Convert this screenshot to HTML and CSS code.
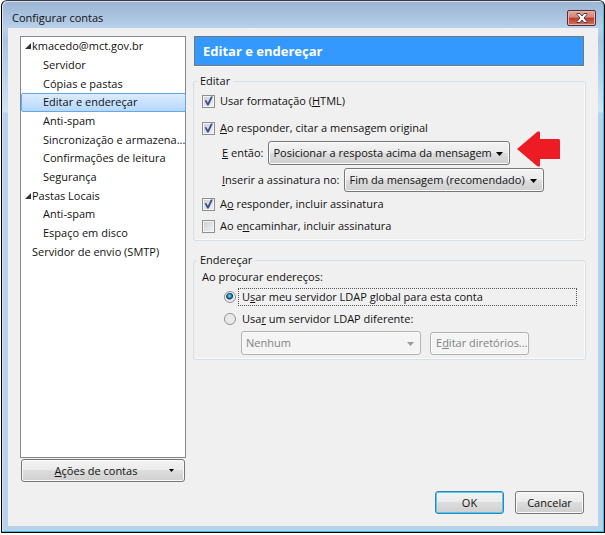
FILE: index.html
```
<!DOCTYPE html>
<html lang="pt-BR">
<head>
<meta charset="utf-8">
<title>Configurar contas</title>
<link rel="stylesheet" href="styles.css">
</head>
<body>
<div class="window">
  <header class="titlebar">
    <h1>Configurar contas</h1>
    <button class="close" type="button" aria-label="Fechar">
      <svg width="12" height="10" viewBox="0 0 12 10"><path d="M1 .5h3L6 3 8 .5h3v1L8 5l3 3.5v1H8L6 7 4 9.500H1v-1L4 5 1 1.500z" fill="#fff" stroke="#4c3b4d" stroke-width="1"/></svg>
    </button>
  </header>
  <form class="client">
    <div class="columns">
      <nav class="sidebar">
        <ul class="tree">
          <li class="parent"><svg class="twisty" viewBox="0 0 6 6"><path d="M6 0v6H0z"/></svg>kmacedo@mct.gov.br</li>
          <li class="child">Servidor</li>
          <li class="child">Cópias e pastas</li>
          <li class="child selected">Editar e endereçar</li>
          <li class="child">Anti-spam</li>
          <li class="child">Sincronização e armazena...</li>
          <li class="child">Confirmações de leitura</li>
          <li class="child">Segurança</li>
          <li class="parent"><svg class="twisty" viewBox="0 0 6 6"><path d="M6 0v6H0z"/></svg>Pastas Locais</li>
          <li class="child">Anti-spam</li>
          <li class="child">Espaço em disco</li>
          <li class="parent">Servidor de envio (SMTP)</li>
        </ul>
        <button class="button actions" type="button"><span><u>A</u>ções de contas</span><svg class="caret" width="5" height="3" viewBox="0 0 5 3"><path d="M0 0h5L2.500 3z"/></svg></button>
      </nav>
      <main class="panel">
        <h2 class="banner">Editar e endereçar</h2>
        <fieldset class="group">
          <legend>Editar</legend>
          <div class="row spaced"><input type="checkbox" id="html" checked><label for="html">Usar formatação (<u>H</u>TML)</label></div>
          <div class="row"><input type="checkbox" id="quote" checked><label for="quote"><u>A</u>o responder, citar a mensagem original</label></div>
          <div class="row choice">
            <label for="position"><u>E</u> então:</label>
            <span class="dropdown reply"><select id="position"><option>Posicionar a resposta acima da mensagem</option></select><svg class="arrow" viewBox="0 0 7 4"><path d="M0 0h7L3.500 4z"/></svg></span>
            <span class="pointer"><svg width="44" height="36" viewBox="0 0 44 36"><path d="M0 18 20 1q3-2 3 1v6h19q1 0 1 2v18H23v6q0 3-3 1z" fill="#ed1c24"/></svg></span>
          </div>
          <div class="row choice">
            <label for="place"><u>I</u>nserir a assinatura no:</label>
            <span class="dropdown signature"><select id="place"><option>Fim da mensagem (recomendado)</option></select><svg class="arrow" viewBox="0 0 7 4"><path d="M0 0h7L3.500 4z"/></svg></span>
          </div>
          <div class="row"><input type="checkbox" id="sigreply" checked><label for="sigreply">A<u>o</u> responder, incluir assinatura</label></div>
          <div class="row"><input type="checkbox" id="sigfwd"><label for="sigfwd">Ao e<u>n</u>caminhar, incluir assinatura</label></div>
        </fieldset>
        <fieldset class="group">
          <legend>Endereçar</legend>
          <p class="intro">Ao procurar endereços:</p>
          <div class="row radio"><input type="radio" name="ldap" id="global" checked><label class="focused" for="global">U<u>s</u>ar meu servidor LDAP global para esta conta</label></div>
          <div class="row radio"><input type="radio" name="ldap" id="other"><label for="other">Usa<u>r</u> um servidor LDAP diferente:</label></div>
          <div class="row directory">
            <span class="dropdown server"><select aria-label="Servidor LDAP" disabled><option>Nenhum</option></select><svg class="arrow" viewBox="0 0 7 4"><path d="M0 0h7L3.500 4z"/></svg></span>
            <button class="button edit" type="button" disabled>E<u>d</u>itar diretórios...</button>
          </div>
        </fieldset>
      </main>
    </div>
    <footer class="footer">
      <button class="button default" type="button">OK</button>
      <button class="button" type="button">Cancelar</button>
    </footer>
  </form>
</div>
</body>
</html>
```
FILE: styles.css
```
* {
  box-sizing: border-box;
}

body {
  margin: 0;
  height: 100vh;
  padding: 0 0 2px 1px;
  background: #fff;
  color: #111;
  font: 11px/16px "Open Sans", "Noto Sans", sans-serif;
}

.window {
  display: flex;
  flex-direction: column;
  height: 100%;
  padding: 0 6px 6px 6px;
  border: 1px solid #000;
  border-top-color: #3a3a40;
  border-radius: 6px 6px 0 0;
  background: linear-gradient(#9ab4d2 0, #b9d1ea 28px, #a9c4e2 40px, #d2e3f4 111px, #b9d1ea 112px);
  box-shadow: inset -1px -1px 0 #35c0dc, inset 1px 1px 0 #d5e3f1;
}

.titlebar {
  display: flex;
  align-items: center;
  justify-content: space-between;
  height: 27px;
  flex: none;
  padding: 6px 2px 0 4px;
}

h1 {
  margin: 0;
  font-size: 11px;
  font-weight: 400;
}

.close {
  display: flex;
  align-items: center;
  justify-content: center;
  width: 29px;
  height: 16px;
  padding: 0;
  border: 1px solid #5b2b3a;
  border-radius: 2px;
  background: linear-gradient(#e5a698, #d58473 45%, #b93a26 50%, #cf7560);
  box-shadow: inset 0 0 0 1px #e6b4aa;
}

.client {
  display: flex;
  flex-direction: column;
  flex: 1;
  min-height: 0;
  padding: 8px 12px 12px;
  background: #f0f0f0;
}

.columns {
  display: flex;
  flex: 1;
  gap: 7px;
}

.sidebar {
  display: flex;
  flex-direction: column;
  width: 166px;
  flex: none;
}

.tree {
  display: grid;
  grid-template-rows: repeat(12, 1fr);
  align-items: stretch;
  height: 422px;
  margin: 0 0 1px;
  padding: 0 0 196px;
  border: 1px solid #828790;
  background: #fff;
  list-style: none;
}

.tree li {
  display: flex;
  align-items: center;
  border: 1px solid transparent;
  border-radius: 2px;
  white-space: nowrap;
}

.tree .parent {
  position: relative;
  padding-left: 10px;
}

.tree .child {
  padding-left: 21px;
}

.tree .selected {
  border-color: #66a7e8;
  background: linear-gradient(#dcecfd, #b5d8fd);
}

.twisty {
  position: absolute;
  left: 3px;
  width: 6px;
  height: 6px;
  fill: #333;
}

.button {
  height: 23px;
  padding: 0 5px;
  border: 1px solid #777;
  border-radius: 3px;
  background: linear-gradient(#f3f3f3, #ebebeb 49%, #dddddd 50%, #cfcfcf);
  box-shadow: inset 0 0 0 1px #fafafa;
  color: #111;
  font: inherit;
}

.actions {
  display: flex;
  align-items: center;
  margin: 0 1px;
  padding: 0 10px 0 1px;
}

.actions span {
  flex: 1;
}

.panel {
  flex: 1;
  min-width: 0;
}

.banner {
  height: 30px;
  margin: 0 2px 7px 1px;
  padding: 0 8px;
  border: 1px solid #777;
  background: #39f;
  box-shadow: 0 1px 0 #fff;
  color: #fff;
  font-size: 13px;
  font-weight: 700;
  line-height: 28px;
}

.group {
  margin: 0 0 11px;
  padding: 0 8px 3px;
  border: 1px solid #d5dfe5;
  border-radius: 3px;
  box-shadow: inset -1px -1px 0 #fafafa;
}

legend {
  margin-left: -5px;
  padding: 0 3px;
}

.row {
  display: flex;
  align-items: center;
  height: 22px;
  white-space: nowrap;
}

.spaced {
  margin: 1px 0 5px;
}

.choice {
  position: relative;
  height: 27px;
  gap: 5px;
  padding-left: 20px;
}

input {
  flex: none;
  margin: 0;
  appearance: none;
}

input[type="checkbox"] {
  width: 13px;
  height: 13px;
  margin-right: 5px;
  border: 1px solid #8e8f8f;
  background: linear-gradient(135deg, #c8cdd4, #f4f4f4);
  box-shadow: inset 0 0 0 1px #f4f4f4;
}

input[type="checkbox"]:checked::before {
  content: "";
  display: block;
  width: 11px;
  height: 11px;
  background: #3c4f91;
  clip-path: polygon(15% 45%, 30% 42%, 44% 65%, 72% 8%, 90% 8%, 52% 92%, 38% 92%);
}

.dropdown {
  position: relative;
  display: flex;
}

select {
  width: 100%;
  height: 24px;
  padding: 0 6px 0 4px;
  border: 1px solid #777;
  border-radius: 3px;
  appearance: none;
  background: linear-gradient(#f3f3f3, #ebebeb 49%, #dddddd 50%, #cfcfcf);
  box-shadow: inset 0 0 0 1px #fafafa;
  color: #111;
  font: inherit;
}

.arrow {
  position: absolute;
  top: 11px;
  right: 7px;
  width: 7px;
  height: 4px;
  pointer-events: none;
}

.reply {
  width: 242px;
}

.signature {
  width: 200px;
}

.pointer {
  position: absolute;
  top: -8px;
  left: 315px;
  z-index: 1;
}

.intro {
  margin: 1px 0;
}

.radio {
  padding-left: 22px;
}

.radio label {
  flex: 1;
  padding: 0 3px;
  border: 1px solid transparent;
}

.radio .focused {
  border: 1px dotted #555;
}

input[type="radio"] {
  width: 12px;
  height: 12px;
  margin-right: 2px;
  border: 1px solid #8e8f8f;
  border-radius: 50%;
  background: radial-gradient(#eee, #ddd);
  box-shadow: inset 0 0 0 1px #f4f4f4;
}

input[type="radio"]:checked {
  background: radial-gradient(circle at 45% 40%, #8fdcf5 0, #1b7fae 2px, #12384f 3px, #dfe6ea 4px);
}

.directory {
  height: 26px;
  gap: 9px;
  padding-left: 39px;
}

.server {
  width: 180px;
}

.edit {
  width: 99px;
}

select:disabled,
.button:disabled {
  border-color: #adb2b5;
  background: #f4f4f4;
  color: #838383;
  opacity: 1;
}

select:disabled + .arrow {
  fill: #999;
}

.footer {
  display: flex;
  justify-content: flex-end;
  gap: 11px;
  padding-right: 2px;
}

.footer .button {
  width: 69px;
}

.footer .default {
  border-color: #3c7fb1;
  box-shadow: inset 0 0 0 1px #46d0f2;
}
```
